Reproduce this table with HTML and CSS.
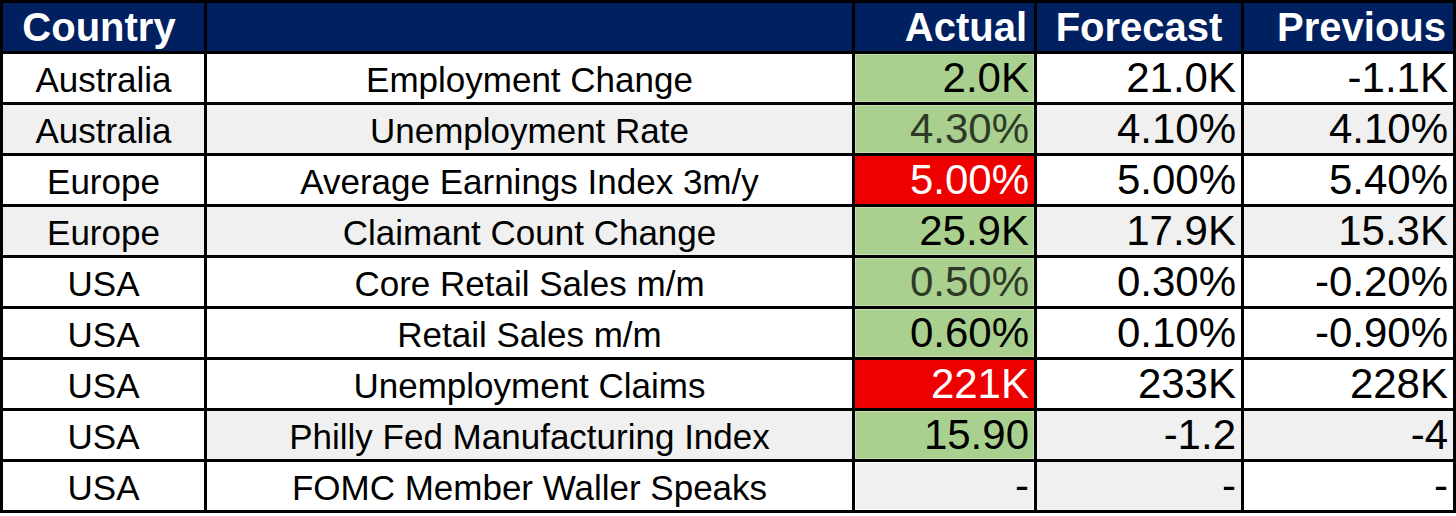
FILE: index.html
```html
<!DOCTYPE html>
<html>
<head>
<meta charset="utf-8">
<link rel="stylesheet" href="styles.css">
</head>
<body>
<div class="grid">
  <div class="c h left">Country</div>
  <div class="c h"></div>
  <div class="c h num">Actual</div>
  <div class="c h mid">Forecast</div>
  <div class="c h num">Previous</div>

  <div class="c t">Australia</div>
  <div class="c t">Employment Change</div>
  <div class="c n green">2.0K</div>
  <div class="c n">21.0K</div>
  <div class="c n">-1.1K</div>

  <div class="c t g">Australia</div>
  <div class="c t g">Unemployment Rate</div>
  <div class="c n green thin">4.30%</div>
  <div class="c n g">4.10%</div>
  <div class="c n g">4.10%</div>

  <div class="c t">Europe</div>
  <div class="c t">Average Earnings Index 3m/y</div>
  <div class="c n red">5.00%</div>
  <div class="c n">5.00%</div>
  <div class="c n">5.40%</div>

  <div class="c t g">Europe</div>
  <div class="c t g">Claimant Count Change</div>
  <div class="c n green">25.9K</div>
  <div class="c n g">17.9K</div>
  <div class="c n g">15.3K</div>

  <div class="c t">USA</div>
  <div class="c t">Core Retail Sales m/m</div>
  <div class="c n green thin">0.50%</div>
  <div class="c n">0.30%</div>
  <div class="c n">-0.20%</div>

  <div class="c t">USA</div>
  <div class="c t">Retail Sales m/m</div>
  <div class="c n green">0.60%</div>
  <div class="c n">0.10%</div>
  <div class="c n">-0.90%</div>

  <div class="c t">USA</div>
  <div class="c t">Unemployment Claims</div>
  <div class="c n red">221K</div>
  <div class="c n">233K</div>
  <div class="c n">228K</div>

  <div class="c t">USA</div>
  <div class="c t g">Philly Fed Manufacturing Index</div>
  <div class="c n green">15.90</div>
  <div class="c n g">-1.2</div>
  <div class="c n g">-4</div>

  <div class="c t">USA</div>
  <div class="c t">FOMC Member Waller Speaks</div>
  <div class="c n grey">-</div>
  <div class="c n g">-</div>
  <div class="c n">-</div>
</div>
</body>
</html>
```

FILE: styles.css
```css
html, body {
  margin: 0;
  padding: 0;
  background: #ffffff;
}

.grid {
  display: grid;
  grid-template-columns: 201px 645px 179px 204px 209px;
  grid-auto-rows: 48px;
  gap: 3px;
  padding: 3px;
  background: #000000;
  width: 1456px;
  box-sizing: border-box;
  font-family: "Liberation Sans", Arial, sans-serif;
}

.c {
  background: #ffffff;
  color: #000000;
  display: flex;
  align-items: flex-end;
  box-sizing: border-box;
  white-space: nowrap;
  overflow: hidden;
  line-height: 1.15;
}

.h {
  background: #002060;
  color: #ffffff;
  font-weight: bold;
  font-size: 40px;
  justify-content: flex-end;
  padding: 0 7px 1px 0;
}

.h.left {
  justify-content: center;
  padding-right: 9px;
}

.h.mid {
  justify-content: center;
  padding-right: 0;
}

.t {
  font-size: 35px;
  justify-content: center;
  padding-bottom: 2px;
}

.n {
  font-size: 42px;
  justify-content: flex-end;
  padding: 0 5px 0 0;
}

.g {
  background: #f0f0f0;
}

.green {
  background: #a9d08e;
  box-shadow: inset 0 0 0 1px #c4e0ad;
}

.thin {
  color: #2e3a28;
}

.red {
  background: #ee0000;
  color: #ffffff;
}

.grey {
  background: #f0f0f0;
  box-shadow: inset 0 0 0 1px #ffffff;
}
```
